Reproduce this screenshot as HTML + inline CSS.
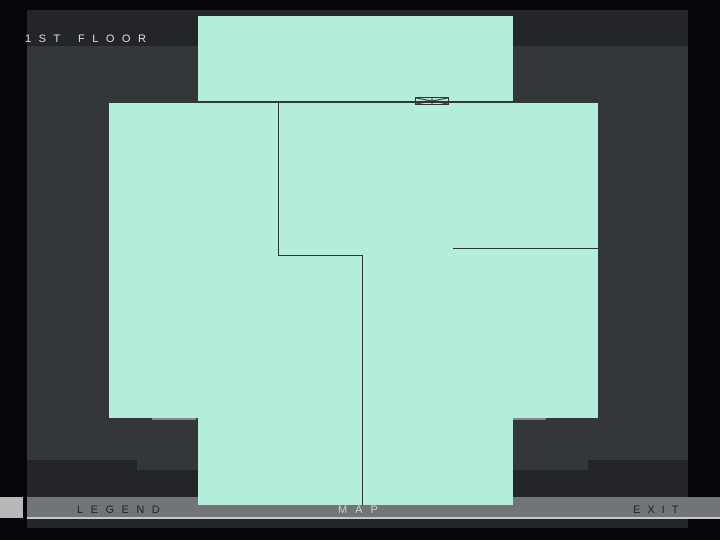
<!DOCTYPE html><html><head><style>
body{margin:0;width:720px;height:540px;background:#06060a;position:relative;overflow:hidden;font-family:"Liberation Sans",sans-serif}
div{position:absolute}
.t{color:#ddd;font-size:11px;letter-spacing:7.5px}
</style></head><body>
<div style="left:27px;top:10px;width:661px;height:518px;background:#34373a"></div>
<div style="left:27px;top:10px;width:661px;height:36px;background:#232528"></div>
<div style="left:27px;top:460px;width:110px;height:37px;background:#232528"></div>
<div style="left:137px;top:470px;width:451px;height:27px;background:#232528"></div>
<div style="left:588px;top:460px;width:100px;height:37px;background:#232528"></div>
<div style="left:27px;top:497px;width:693px;height:20px;background:#727577"></div>
<div style="left:27px;top:517px;width:693px;height:2px;background:#c8c8c8"></div>
<div style="left:0;top:497px;width:23px;height:21px;background:#b8b8b8"></div>
<div style="left:27px;top:519px;width:661px;height:9px;background:#232528"></div>
<div class="t" style="left:25px;top:33px;">1ST FLOOR</div>
<div class="t" style="left:77px;top:504px;color:#222;">LEGEND</div>
<div class="t" style="left:338px;top:504px;color:#ccc;letter-spacing:8px">MAP</div>
<div class="t" style="left:633px;top:504px;color:#222;letter-spacing:7px">EXIT</div>
<div style="left:152px;top:417px;width:44px;height:3px;background:#888"></div>
<div style="left:513px;top:417px;width:33px;height:3px;background:#888"></div>
<div style="left:198px;top:16px;width:315px;height:86px;background:#b2eed9"></div>
<div style="left:109px;top:103px;width:489px;height:315px;background:#b2eed9"></div>
<div style="left:198px;top:417px;width:315px;height:88px;background:#b2eed9"></div>
<svg style="position:absolute;left:0;top:0" width="720" height="540">
<g stroke="#333" stroke-width="1" fill="none">
<line x1="198" y1="101.5" x2="513" y2="101.5"/>
<line x1="278.5" y1="101" x2="278.5" y2="255"/>
<line x1="278" y1="255.5" x2="362" y2="255.5"/>
<line x1="362.5" y1="255" x2="362.5" y2="505"/>
<line x1="453" y1="248.5" x2="598" y2="248.5"/>
<rect x="415.5" y="97.5" width="33" height="7"/>
<path d="M416 98 L448 104 M416 104 L448 98 M432 97 V105"/>
</g></svg>
</body></html>
